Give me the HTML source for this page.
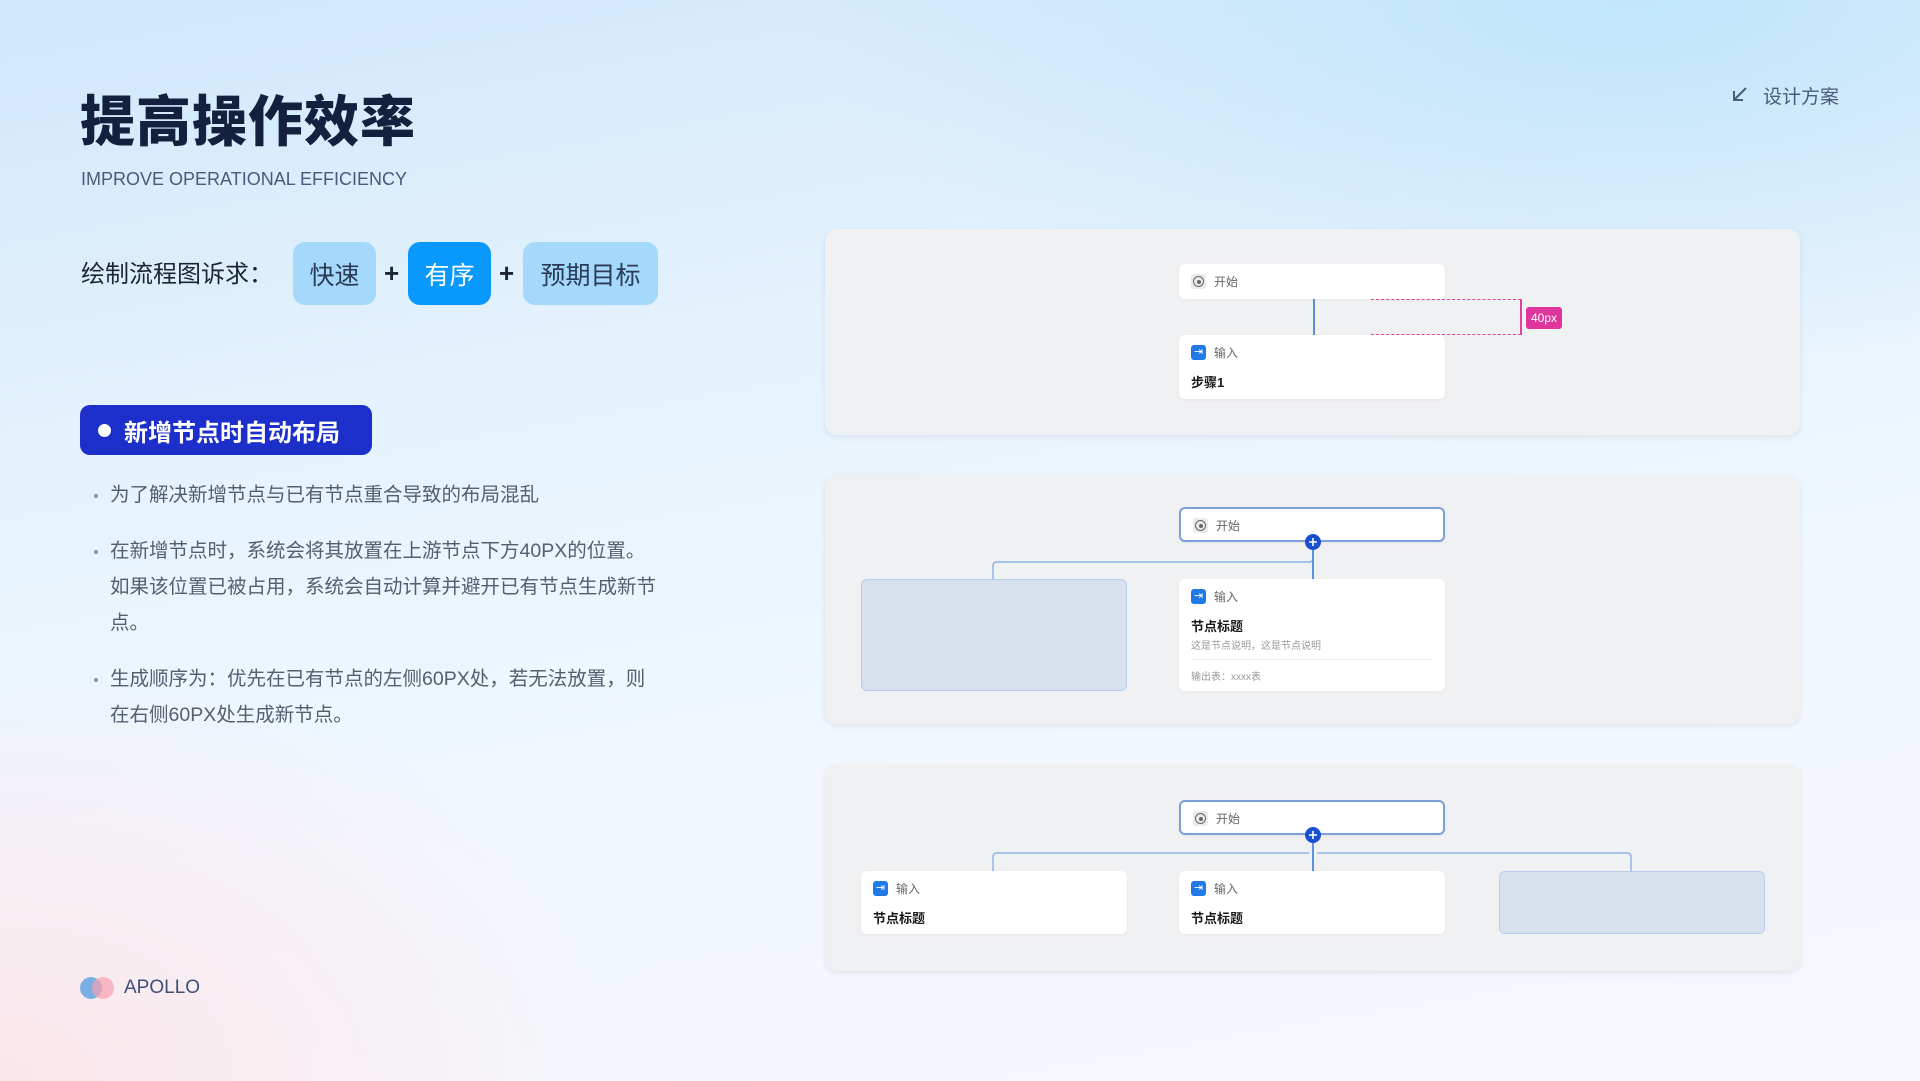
<!DOCTYPE html>
<html><head><meta charset="utf-8"><style>
*{margin:0;padding:0;box-sizing:border-box}
body{width:1920px;height:1081px;overflow:hidden;position:relative;font-family:"Liberation Sans","Noto Sans CJK SC",sans-serif;
background:
radial-gradient(ellipse 900px 600px at 0% 100%, rgba(252,228,232,0.9), rgba(252,228,232,0) 70%),
radial-gradient(ellipse 1100px 500px at 85% 0%, rgba(190,228,250,0.9), rgba(190,228,250,0) 75%),
linear-gradient(170deg,#cfe8fb 0%,#e6f3fd 35%,#f2f8fe 65%,#f6f9fd 100%);}
.a{position:absolute}
.title{left:80px;top:77px;font-size:55px;font-weight:900;color:#13213f;letter-spacing:1px}
.sub{left:81px;top:169px;font-size:18px;color:#4a5a7a}
.req{left:81px;top:254px;font-size:24px;color:#1d2434}
.chip{top:242px;height:63px;border-radius:12px;font-size:25px;display:flex;align-items:center;justify-content:center;color:#2b3a55;background:#a5d9fc}
.plus{top:258px;font-size:26px;color:#1d2434;font-weight:bold}
.pill{left:80px;top:405px;width:292px;height:50px;border-radius:10px;background:#1c2fcb;color:#fff;font-size:24px;font-weight:bold;display:flex;align-items:center;padding-left:44px}
.pill:before{content:"";position:absolute;left:18px;top:19px;width:13px;height:13px;border-radius:50%;background:#fff}
.list{left:94px;top:477px;font-size:19.5px;color:#555e6e;line-height:36px;white-space:nowrap}
.list div{position:relative;padding-left:16px;margin-bottom:20px}
.list div:before{content:"";position:absolute;left:0;top:17px;width:4px;height:4px;border-radius:50%;background:#8a93a3}
.panel{left:825px;width:975px;background:#f0f1f3;border-radius:12px;box-shadow:0 2px 6px rgba(120,140,170,.18)}
.node{position:absolute;width:266px;background:#fff;border-radius:6px;box-shadow:0 1px 3px rgba(0,0,0,.05)}
.hd{position:absolute;left:12px;top:9px;font-size:12px;color:#666;display:flex;align-items:center;gap:8px}
.ic{width:15px;height:15px;border-radius:3px;background:#1f7ae8;color:#fff;font-size:11px;line-height:15px;text-align:center}
.st{width:15px;height:15px;border-radius:3px;background:#e8eaee;display:flex;align-items:center;justify-content:center}
.st span{width:11px;height:11px;border:1.3px solid #666;border-radius:50%;display:flex;align-items:center;justify-content:center}
.st span:after{content:"";width:4px;height:4px;background:#666;border-radius:50%}
.tt{position:absolute;left:12px;font-size:13px;font-weight:bold;color:#1a1a1a}
.ghost{position:absolute;background:#d8e1ee;border:1.5px solid #b6cdee;border-radius:6px}
.sel{border:2px solid #7c9fd6}
</style></head><body>
<div class="a title">提高操作效率</div>
<div class="a sub">IMPROVE OPERATIONAL EFFICIENCY</div>
<div class="a" style="left:1731px;top:82px;font-size:19px;color:#4a5a7a">
<svg width="18" height="18" viewBox="0 0 18 18" style="position:absolute;left:0;top:3px"><path d="M15 3 L3 15 M3 6 V15 H12" stroke="#4a5a7a" stroke-width="2" fill="none"/></svg>
<span style="margin-left:32px">设计方案</span></div>
<div class="a req">绘制流程图诉求：</div>
<div class="a chip" style="left:293px;width:83px">快速</div>
<div class="a plus" style="left:384px">+</div>
<div class="a chip" style="left:408px;width:83px;background:#0998fb;color:#fff">有序</div>
<div class="a plus" style="left:499px">+</div>
<div class="a chip" style="left:523px;width:135px">预期目标</div>
<div class="a pill">新增节点时自动布局</div>
<div class="a list">
<div>为了解决新增节点与已有节点重合导致的布局混乱</div>
<div>在新增节点时，系统会将其放置在上游节点下方40PX的位置。<br>如果该位置已被占用，系统会自动计算并避开已有节点生成新节<br>点。</div>
<div>生成顺序为：优先在已有节点的左侧60PX处，若无法放置，则<br>在右侧60PX处生成新节点。</div>
</div>
<div class="a" style="left:80px;top:977px;width:22px;height:22px;border-radius:50%;background:rgba(90,160,225,.8)"></div>
<div class="a" style="left:92px;top:977px;width:22px;height:22px;border-radius:50%;background:rgba(250,160,175,.7)"></div>
<div class="a" style="left:124px;top:977px;font-size:19px;color:#3f4f7a">APOLLO</div>

<!-- panel 1 -->
<div class="a panel" style="top:229px;height:206px">
<div class="node" style="left:354px;top:35px;height:35px"><div class="hd"><div class="st"><span></span></div>开始</div></div>
<div class="a" style="left:488px;top:70px;width:1.5px;height:36px;background:#5b8ed8"></div>
<div class="node" style="left:354px;top:106px;height:64px"><div class="hd"><div class="ic">⇥</div>输入</div><div class="tt" style="top:37px">步骤1</div></div>
<div class="a" style="left:546px;top:70px;width:150px;border-top:1.5px dashed #e0449a"></div>
<div class="a" style="left:546px;top:105px;width:150px;border-top:1.5px dashed #e0449a"></div>
<div class="a" style="left:695px;top:70px;width:1.5px;height:36px;background:#e0449a"></div>
<div class="a" style="left:701px;top:78px;width:36px;height:22px;background:#e0359a;border-radius:3px;color:#fff;font-size:12px;line-height:22px;text-align:center">40px</div>
</div>

<!-- panel 2 -->
<div class="a panel" style="top:476px;height:248px">
<div class="node sel" style="left:354px;top:31px;height:35px"><div class="hd" style="top:8px"><div class="st"><span></span></div>开始</div></div>
<svg class="a" style="left:0;top:0" width="975" height="248"><path d="M488 74 V103 M488 82 Q488 86 484 86 H172 Q168 86 168 90 V103" stroke="#8fb5e6" stroke-width="1.5" fill="none"/><path d="M488 74 V103" stroke="#3d7de0" stroke-width="1.5"/><circle cx="488" cy="66" r="8" fill="#1a50d0"/><path d="M484 66 H492 M488 62 V70" stroke="#fff" stroke-width="1.6"/></svg>
<div class="ghost" style="left:36px;top:103px;width:266px;height:112px"></div>
<div class="node" style="left:354px;top:103px;height:112px"><div class="hd"><div class="ic">⇥</div>输入</div><div class="tt" style="top:37px">节点标题</div>
<div class="a" style="left:12px;top:58px;font-size:10px;color:#999">这是节点说明，这是节点说明</div>
<div class="a" style="left:12px;right:12px;top:80px;border-top:1px solid #eee"></div>
<div class="a" style="left:12px;top:89px;font-size:10px;color:#999">输出表：xxxx表</div></div>
</div>

<!-- panel 3 -->
<div class="a panel" style="top:764px;height:207px">
<div class="node sel" style="left:354px;top:36px;height:35px"><div class="hd" style="top:8px"><div class="st"><span></span></div>开始</div></div>
<svg class="a" style="left:0;top:0" width="975" height="207"><path d="M488 79 V107 M484 89 H172 Q168 89 168 93 V107 M492 89 H802 Q806 89 806 93 V107" stroke="#8fb5e6" stroke-width="1.5" fill="none"/><path d="M488 79 V107" stroke="#3d7de0" stroke-width="1.5"/><circle cx="488" cy="71" r="8" fill="#1a50d0"/><path d="M484 71 H492 M488 67 V75" stroke="#fff" stroke-width="1.6"/></svg>
<div class="node" style="left:36px;top:107px;height:63px"><div class="hd"><div class="ic">⇥</div>输入</div><div class="tt" style="top:37px">节点标题</div></div>
<div class="node" style="left:354px;top:107px;height:63px"><div class="hd"><div class="ic">⇥</div>输入</div><div class="tt" style="top:37px">节点标题</div></div>
<div class="ghost" style="left:674px;top:107px;width:266px;height:63px"></div>
</div>
</body></html>
